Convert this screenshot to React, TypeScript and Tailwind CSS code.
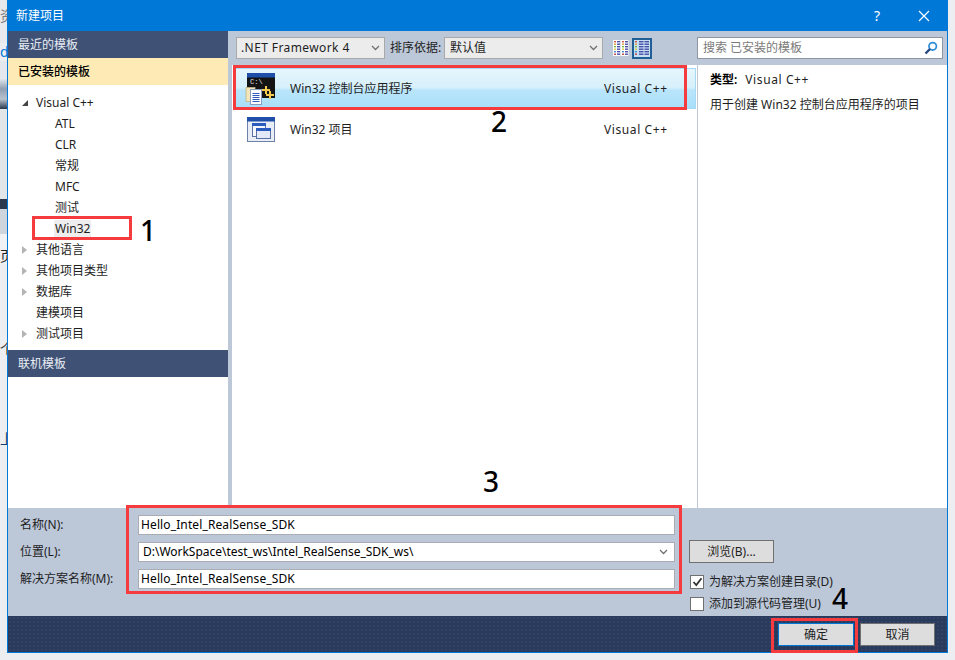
import type { ReactNode } from 'react'

const font = 'font-["Noto_Sans","Noto_Sans_CJK_SC",sans-serif]'

const treeRows = [
  { label: 'Visual C++', depth: 0, arrow: 'open' },
  { label: 'ATL', depth: 1 },
  { label: 'CLR', depth: 1 },
  { label: '常规', depth: 1 },
  { label: 'MFC', depth: 1 },
  { label: '测试', depth: 1 },
  { label: 'Win32', depth: 1, selected: true },
  { label: '其他语言', depth: 0, arrow: 'closed' },
  { label: '其他项目类型', depth: 0, arrow: 'closed' },
  { label: '数据库', depth: 0, arrow: 'closed' },
  { label: '建模项目', depth: 0 },
  { label: '测试项目', depth: 0, arrow: 'closed' },
]

// what shows of the window behind the dialog, top to bottom
const behindBands = [
  { h: 'h-[9px]', bg: 'bg-[#e6e8ec]' },
  { h: 'h-[14px]', bg: 'bg-[#e6e8ec]', text: '资', color: 'text-[#777]' },
  { h: 'h-[20px]', bg: 'bg-[#e8eaee]' },
  { h: 'h-[18px]', bg: 'bg-[#eceef2]', text: 'd', color: 'text-[#0078d7]' },
  { h: 'h-[18px]', bg: 'bg-[#e4e8ee]' },
  { h: 'h-[30px]', bg: 'bg-[linear-gradient(180deg,#dfe6ec,#8f9eb2,#b8c2ce,#28364c)]' },
  { h: 'h-[90px]', bg: 'bg-[#e3e6e9]' },
  { h: 'h-[10px]', bg: 'bg-[#2a3850]' },
  { h: 'h-[25px]', bg: 'bg-[#cfd5dd]' },
  { h: 'h-[14px]', bg: 'bg-[#f0f2f5]' },
  { h: 'h-[16px]', bg: 'bg-[#eef0f3]', text: '页', color: 'text-[#222]' },
  { h: 'h-[78px]', bg: 'bg-[#eceef1]' },
  { h: 'h-[14px]', bg: 'bg-[#eceef1]', text: '个', color: 'text-[#333]' },
  { h: 'h-[76px]', bg: 'bg-[#eceef1]' },
  { h: 'h-[14px]', bg: 'bg-[#eceef1]', text: '上', color: 'text-[#14406e]' },
]

function ConsoleIcon() {
  return (
    <svg width="30" height="32" viewBox="0 0 30 32">
      <rect x="2" y="0" width="28" height="25" fill="#141414" />
      <rect x="2" y="0" width="28" height="4.5" fill="#1f4fa8" />
      <text x="5" y="11" fontSize="7" fill="#e2e2e2" fontFamily="Liberation Mono">C:\</text>
      <path d="M20 13h2v3h3v2h-3v3h-2v-3h-3v-2h3z" fill="#f2cb50" />
      <path d="M24 18h2v3h3v2h-3v3h-2v-3h-3v-2h3z" fill="#f2cb50" />
      <rect x="1" y="14.5" width="9" height="14" fill="#f4e6b8" stroke="#c3b487" strokeWidth="0.8" />
      <rect x="5.5" y="16.5" width="11" height="15" fill="#fbfcff" stroke="#8a9cbc" />
      <path d="M7.5 20.5h7M7.5 22.5h7M7.5 24.5h7M7.5 26.5h7M7.5 28.5h7" stroke="#2f5bb8" />
    </svg>
  )
}

function WindowIcon() {
  return (
    <svg width="28" height="25" viewBox="0 0 28 25" className="ml-[2px]">
      <rect x="0.5" y="0.5" width="27" height="24" fill="#e9edf6" stroke="#6d80a8" />
      <rect x="0" y="0" width="28" height="4.5" fill="#1f4fa8" />
      <rect x="5.5" y="6.5" width="13" height="13" fill="#f5f7fc" stroke="#5a6fa3" />
      <rect x="5" y="6" width="14" height="3" fill="#2a5cc0" />
      <rect x="9.5" y="11.5" width="14" height="10" fill="#e3e9f6" stroke="#5a6fa3" />
      <rect x="9" y="11" width="15" height="3" fill="#2a5cc0" />
    </svg>
  )
}

const viewColors = ['#d9534f', '#e0a030', '#7ab648', '#d9d040', '#4a90d0', '#c84040']

function ColumnsViewIcon() {
  return (
    <svg width="16" height="16" viewBox="0 0 16 16">
      {[0, 8].map(x => (
        <g key={x}>
          <rect x={x} y="0" width="7.5" height="16" fill="#fff" />
          {viewColors.map((color, i) => (
            <g key={color}>
              <rect x={x + 1} y={1 + i * 2.5} width="2" height="1.4" fill={color} />
              <rect x={x + 4} y={1 + i * 2.5} width="3" height="1.4" fill="#4a4fa8" />
            </g>
          ))}
        </g>
      ))}
    </svg>
  )
}

function ListViewIcon() {
  return (
    <svg width="16" height="16" viewBox="0 0 16 16">
      {viewColors.map((color, i) => (
        <g key={color}>
          <rect x="1" y={1 + i * 2.5} width="2" height="1.4" fill={color} />
          <rect x="5" y={1 + i * 2.5} width="4.5" height="1.4" fill="#4a4fa8" />
          <rect x="10.5" y={1 + i * 2.5} width="4.5" height="1.4" fill="#4a4fa8" />
        </g>
      ))}
    </svg>
  )
}

function Chevron() {
  return (
    <svg width="9" height="6" viewBox="0 0 9 6" className="shrink-0">
      <path d="M1 1l3.5 3.5L8 1" fill="none" stroke="#707070" strokeWidth="1.3" />
    </svg>
  )
}

function TemplateRow({ title, selected, icon }: { title: string; selected?: boolean; icon: ReactNode }) {
  return (
    <div
      className={`flex h-[41px] items-center border ${
        selected
          ? 'border-[#a5d9f5] bg-[linear-gradient(180deg,#e6f6fd_0%,#d6f0fb_48%,#b9e5fb_54%,#a8dffa_100%)]'
          : 'border-transparent'
      }`}
    >
      <div className="flex w-[54px] pl-[9px]">{icon}</div>
      <span className="flex-1">{title}</span>
      <span className="w-[91px] tracking-[0.6px]">Visual C++</span>
    </div>
  )
}

function FormLabel({ children }: { children: ReactNode }) {
  return <div className="flex h-[27px] items-center">{children}</div>
}

function Field({ children, chevron }: { children: ReactNode; chevron?: boolean }) {
  return (
    <div className="flex h-[20px] items-center justify-between border border-[#a9adb3] bg-white px-[2px] text-black">
      {children}
      {chevron && <span className="pr-[4px]"><Chevron /></span>}
    </div>
  )
}

function Checkbox({ label, checked }: { label: string; checked?: boolean }) {
  return (
    <div className="flex h-[22px] items-center gap-[5px]">
      <div className="flex h-[14px] w-[14px] items-center justify-center border border-[#707070] bg-white">
        {checked && (
          <svg width="11" height="10" viewBox="0 0 11 10">
            <path d="M1.5 5l2.8 3L9.5 1.2" fill="none" stroke="#333" strokeWidth="1.8" />
          </svg>
        )}
      </div>
      <span>{label}</span>
    </div>
  )
}

function Redbox({ className }: { className: string }) {
  return <div className={`absolute border-[3px] border-[#f63b3f] ${className}`} />
}

function Mark({ className, children }: { className: string; children: ReactNode }) {
  return <span className={`absolute font-["Noto_Sans",sans-serif] text-[28px] font-medium leading-none text-black ${className}`}>{children}</span>
}

export default function App() {
  return (
    <div className={`relative flex h-[660px] w-[955px] overflow-hidden bg-[#eceef2] text-[12px] leading-none text-[#1e1e1e] ${font}`}>
      <div className="flex w-[7px] shrink-0 flex-col overflow-hidden">
        {behindBands.map((band, i) => (
          <div key={i} className={`flex shrink-0 items-center overflow-hidden text-[14px] ${band.h} ${band.bg} ${band.color ?? ''}`}>
            {band.text}
          </div>
        ))}
      </div>

      <div className="flex h-[653px] w-[941px] shrink-0 flex-col border-x border-b border-[#0078d7]">
        <header className="flex h-[31px] items-center justify-between bg-[#0078d7] pl-[8px] pr-[17px] text-white">
          <span>新建项目</span>
          <div className="flex items-center gap-[38px]">
            <span className="text-[14px]">?</span>
            <svg width="12" height="12" viewBox="0 0 12 12">
              <path d="M1 1l10 10M11 1L1 11" stroke="#fff" strokeWidth="1.2" />
            </svg>
          </div>
        </header>

        <div className="flex h-[477px] bg-[#bcc7d8]">
          <aside className="flex w-[220px] flex-col bg-white">
            <div className="flex h-[27px] items-center bg-[#3f5276] pl-[10px] text-[#e9edf3]">最近的模板</div>
            <div className="flex h-[27px] items-center bg-[#fdeab5] pl-[10px] font-medium text-black">已安装的模板</div>
            <div className="flex h-[265px] flex-col pt-[7px]">
              {treeRows.map(row => (
                <div key={row.label} className={`flex h-[21px] items-center ${row.depth ? 'pl-[46px]' : 'pl-[14px]'}`}>
                  {!row.depth && (
                    <span className="flex w-[13px] shrink-0 items-center">
                      {row.arrow === 'open' && <span className="h-0 w-0 border-b-[6px] border-l-[6px] border-b-[#444] border-l-transparent" />}
                      {row.arrow === 'closed' && <span className="h-0 w-0 border-y-[4px] border-l-[5px] border-y-transparent border-l-[#b4b4b4]" />}
                    </span>
                  )}
                  <span className={row.selected ? 'bg-[#eeeeef] px-[1px] py-[3px]' : 'px-[1px]'}>{row.label}</span>
                </div>
              ))}
            </div>
            <div className="flex h-[27px] items-center bg-[#3f5276] pl-[10px] text-[#e9edf3]">联机模板</div>
          </aside>

          <div className="ml-[4px] flex flex-1 flex-col">
            <div className="flex h-[34px] items-center pl-[4px]">
              <div className="flex h-[22px] w-[149px] items-center justify-between border border-[#a9a9a9] bg-[#ececec] pl-[4px] pr-[4px]">
                <span className="tracking-[0.4px]">.NET Framework 4</span>
                <Chevron />
              </div>
              <span className="ml-[5px] w-[54px]">排序依据:</span>
              <div className="flex h-[22px] w-[159px] items-center justify-between border border-[#a9a9a9] bg-[#ececec] pl-[5px] pr-[4px]">
                <span>默认值</span>
                <Chevron />
              </div>
              <div className="ml-[6px] flex h-[21px] w-[23px] items-center justify-center">
                <ColumnsViewIcon />
              </div>
              <div className="flex h-[21px] w-[20px] items-center justify-center border-2 border-[#1f5f95] bg-[#c5dff2]">
                <ListViewIcon />
              </div>
              <div className="ml-[45px] flex h-[22px] w-[246px] items-center justify-between border border-[#8e96a4] bg-white pl-[5px] pr-[4px] text-[#7a7a7a]">
                <span>搜索 已安装的模板</span>
                <svg width="14" height="14" viewBox="0 0 14 14">
                  <circle cx="8.7" cy="5.3" r="3.7" fill="none" stroke="#2f8fd8" strokeWidth="1.8" />
                  <path d="M6 8L1.5 12.5" stroke="#24477f" strokeWidth="2.4" />
                </svg>
              </div>
            </div>

            <div className="flex flex-1">
              <div className="w-[465px] bg-white pl-[3px] pr-[1px] pt-[3px]">
                <TemplateRow title="Win32 控制台应用程序" selected icon={<ConsoleIcon />} />
                <TemplateRow title="Win32 项目" icon={<WindowIcon />} />
              </div>
              <div className="ml-[1px] flex-1 bg-white pl-[12px] pt-[9px]">
                <p className="flex h-[12px] items-center">
                  <span className="font-semibold text-black">类型:</span>
                  <span className="ml-[8px] tracking-[0.6px]">Visual C++</span>
                </p>
                <p className="mt-[13px]">用于创建 Win32 控制台应用程序的项目</p>
              </div>
            </div>
          </div>
        </div>

        <div className="flex h-[108px] bg-[#bcc7d8] pl-[12px]">
          <div className="w-[118px] pt-[3px]">
            <FormLabel>名称(N):</FormLabel>
            <FormLabel>位置(L):</FormLabel>
            <FormLabel>解决方案名称(M):</FormLabel>
          </div>
          <div className="flex w-[537px] flex-col gap-[7px] pt-[7px]">
            <Field><span className="tracking-[0.12px]">Hello_Intel_RealSense_SDK</span></Field>
            <Field chevron>
              <span className="pl-[2px] tracking-[-0.02px]">D:\WorkSpace\test_ws\Intel_RealSense_SDK_ws\</span>
            </Field>
            <Field><span className="tracking-[0.12px]">Hello_Intel_RealSense_SDK</span></Field>
          </div>
          <div className="ml-[14px] flex flex-col pt-[32px]">
            <div className="flex h-[23px] w-[85px] items-center justify-center border border-[#707070] bg-[#dddddd]">浏览(B)...</div>
            <div className="mt-[-2px] pl-[1px] pt-[10px]">
              <Checkbox label="为解决方案创建目录(D)" checked />
              <Checkbox label="添加到源代码管理(U)" />
            </div>
          </div>
        </div>

        <footer className="flex h-[36px] items-start justify-end gap-[6px] bg-[#2a3a5b] bg-[radial-gradient(#30426a_1px,transparent_1px)] bg-size-[4px_4px] pr-[12px] pt-[7px]">
          <button className="h-[23px] w-[76px] border border-[#0078d7] bg-[#dddddd] text-[#1e1e1e]">确定</button>
          <button className="h-[23px] w-[75px] border border-[#707070] bg-[#dddddd] text-[#1e1e1e]">取消</button>
        </footer>
      </div>

      <Redbox className="left-[32px] top-[216px] h-[24px] w-[100px]" />
      <Redbox className="left-[233px] top-[65px] h-[45px] w-[454px]" />
      <Redbox className="left-[126px] top-[505px] h-[89px] w-[556px]" />
      <Redbox className="left-[771px] top-[618px] h-[35px] w-[87px]" />
      <Mark className="left-[140px] top-[216px]">1</Mark>
      <Mark className="left-[491px] top-[107px]">2</Mark>
      <Mark className="left-[483px] top-[467px]">3</Mark>
      <Mark className="left-[832px] top-[584px]">4</Mark>
    </div>
  )
}
